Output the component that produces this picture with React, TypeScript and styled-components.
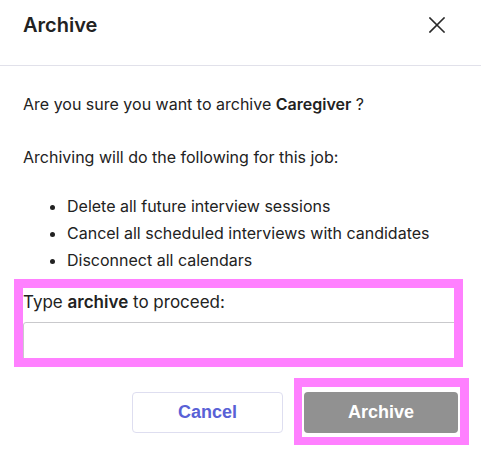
import React from 'react';
import styled, { createGlobalStyle } from 'styled-components';

const GlobalStyle = createGlobalStyle`
  html, body {
    margin: 0;
    padding: 0;
    background: #ffffff;
  }

  body {
    font-family: Inter, "Noto Sans", "Liberation Sans", sans-serif;
    color: #222222;
  }

  * {
    box-sizing: border-box;
  }
`;

export default function App() {
  return (
    <>
      <GlobalStyle />
      <Dialog>
        <Header>
          <Title>Archive</Title>
          <CloseButton aria-label="Close">
            <svg width="16" height="16" viewBox="0 0 16 16" fill="none">
              <path d="M1 1L15 15M15 1L1 15" stroke="#2a2a2a" strokeWidth="1.6" strokeLinecap="square" />
            </svg>
          </CloseButton>
        </Header>
        <Body>
          <Paragraph $gap={26}>
            Are you sure you want to archive <strong>Caregiver</strong> ?
          </Paragraph>
          <Paragraph $gap={22}>Archiving will do the following for this job:</Paragraph>
          <List>
            <li>Delete all future interview sessions</li>
            <li>Cancel all scheduled interviews with candidates</li>
            <li>Disconnect all calendars</li>
          </List>
          <Field>
            <Label>
              Type <strong>archive</strong> to proceed:
            </Label>
            <Input type="text" />
          </Field>
        </Body>
        <Footer>
          <CancelButton>Cancel</CancelButton>
          <ArchiveSlot>
            <ArchiveButton disabled>Archive</ArchiveButton>
          </ArchiveSlot>
        </Footer>
      </Dialog>
    </>
  );
}

const Dialog = styled.div`
  width: 481px;
  height: 451px;
  background: #ffffff;
  overflow: hidden;
`;

const Header = styled.div`
  height: 66px;
  display: flex;
  justify-content: space-between;
  align-items: flex-start;
  padding: 13px 32px 0 23px;
  border-bottom: 1px solid #e1e1ea;
`;

const Title = styled.h2`
  margin: 0;
  font-size: 20px;
  line-height: 24px;
  font-weight: 600;
  color: #222222;
`;

const CloseButton = styled.button`
  width: 24px;
  height: 24px;
  padding: 0;
  border: none;
  background: transparent;
  display: flex;
  align-items: center;
  justify-content: center;
  cursor: pointer;
`;

const Body = styled.div`
  padding: 25px 24px 0 23px;
  font-size: 16px;
  line-height: 27px;
  color: #222222;

  strong {
    font-weight: 600;
  }
`;

const Paragraph = styled.p<{ $gap: number }>`
  margin: 0 0 ${(p) => p.$gap}px;
`;

const List = styled.ul`
  margin: 0 0 15px;
  padding-left: 44px;
`;

const Field = styled.div`
  position: relative;

  &::after {
    content: '';
    position: absolute;
    left: -9px;
    top: -10px;
    right: -6px;
    bottom: -2px;
    border: 9px solid #ff80ff;
    pointer-events: none;
  }
`;

const Label = styled.div`
  font-size: 17px;
  margin-bottom: 6px;
`;

const Input = styled.input`
  display: block;
  width: 100%;
  height: 43px;
  border: 1px solid #c9c9cc;
  border-radius: 3px;
  font: inherit;
  padding: 0 10px;
  outline: none;
`;

const Footer = styled.div`
  display: flex;
  justify-content: flex-end;
  gap: 21px;
  padding: 27px 23px 0;
`;

const BaseButton = styled.button`
  height: 41px;
  border-radius: 4px;
  font-family: "Liberation Sans", Arial, sans-serif;
  font-size: 18px;
  font-weight: 700;
`;

const CancelButton = styled(BaseButton)`
  width: 151px;
  background: #ffffff;
  border: 1px solid #dedef0;
  color: #5961d6;
`;

const ArchiveSlot = styled.div`
  position: relative;

  &::after {
    content: '';
    position: absolute;
    left: -10px;
    top: -14px;
    right: -11px;
    bottom: -12px;
    border: 9px solid #ff80ff;
    border-left-width: 8px;
    border-bottom-width: 8px;
    pointer-events: none;
  }
`;

const ArchiveButton = styled(BaseButton)`
  width: 154px;
  background: #919191;
  border: none;
  color: #ffffff;
`;
